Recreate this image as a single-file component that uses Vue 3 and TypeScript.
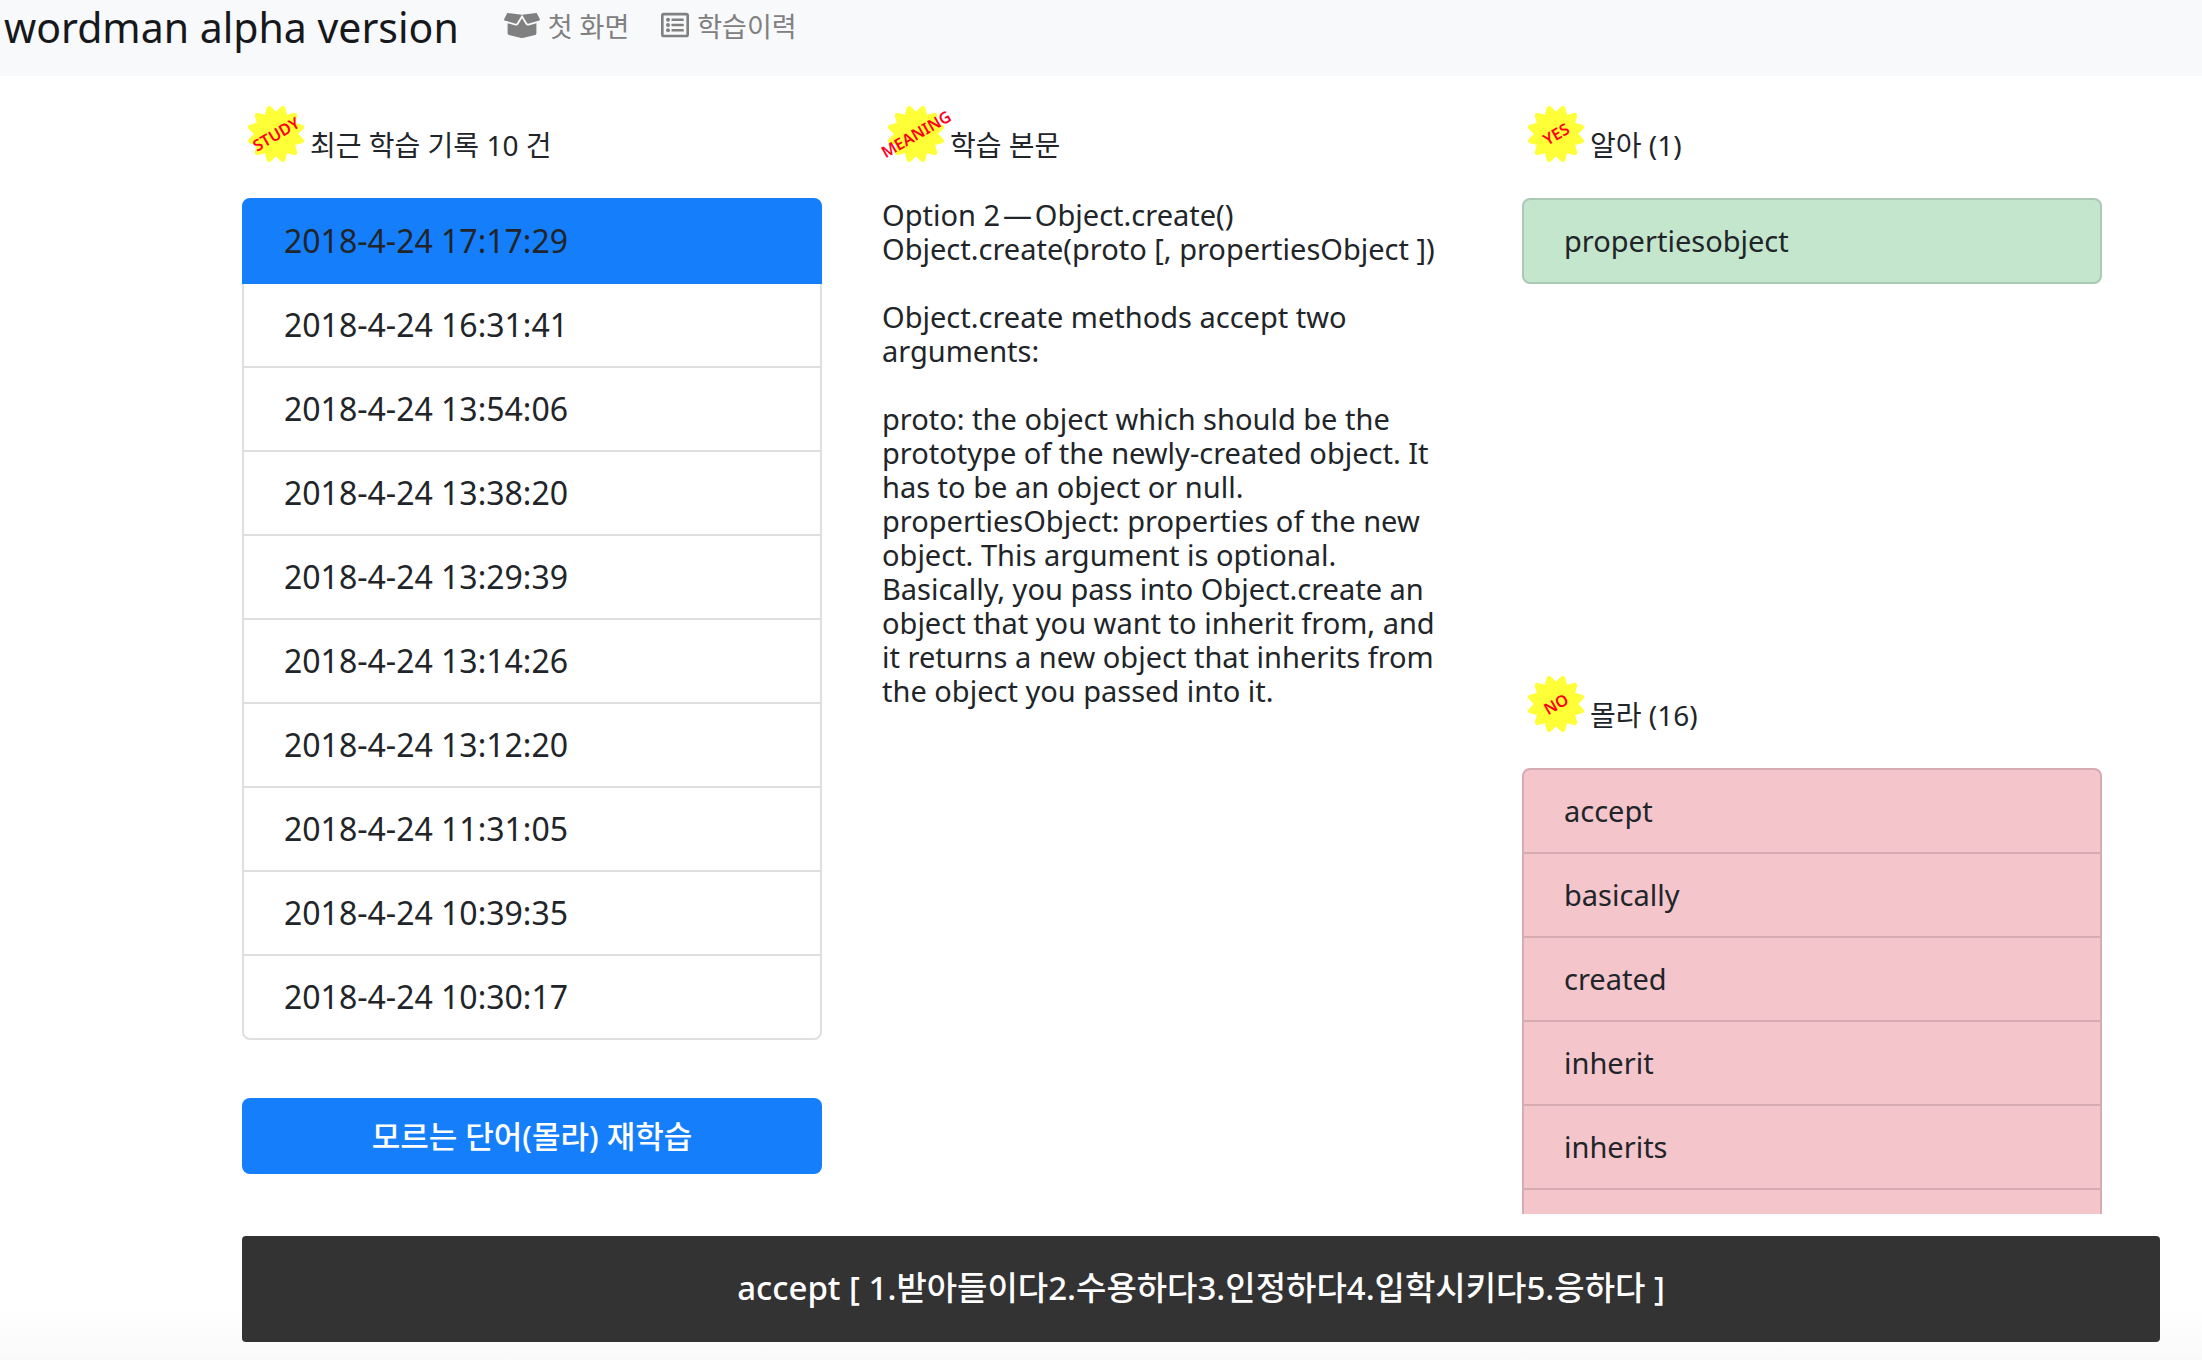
<script setup lang="ts">
import { ref } from 'vue'

const history = [
  '2018-4-24 17:17:29',
  '2018-4-24 16:31:41',
  '2018-4-24 13:54:06',
  '2018-4-24 13:38:20',
  '2018-4-24 13:29:39',
  '2018-4-24 13:14:26',
  '2018-4-24 13:12:20',
  '2018-4-24 11:31:05',
  '2018-4-24 10:39:35',
  '2018-4-24 10:30:17',
]
const selected = ref(0)

const passage = `Option 2\u200a—\u200aObject.create()
Object.create(proto [, propertiesObject ])

Object.create methods accept two
arguments:

proto: the object which should be the
prototype of the newly-created object. It
has to be an object or null.
propertiesObject: properties of the new
object. This argument is optional.
Basically, you pass into Object.create an
object that you want to inherit from, and
it returns a new object that inherits from
the object you passed into it.`

const known = ['propertiesobject']
const unknown = ['accept', 'basically', 'created', 'inherit', 'inherits', '\u00a0']

const burst =
  'M458.622 255.92l45.985-45.005c13.708-12.977 7.316-36.039-10.664-40.339l-62.65-15.99 17.661-62.015c4.991-17.838-11.829-34.663-29.661-29.671l-61.994 17.667-15.984-62.671C337.085.197 313.765-6.276 300.99 7.228L256 53.57 211.011 7.229c-12.63-13.351-36.047-7.234-40.325 10.668l-15.984 62.671-61.995-17.667C74.87 57.907 58.056 74.738 63.046 92.572l17.661 62.015-62.65 15.99C.069 174.878-6.31 197.944 7.392 210.915l45.985 45.005-45.985 45.004c-13.708 12.977-7.316 36.039 10.664 40.339l62.65 15.99-17.661 62.015c-4.991 17.838 11.829 34.663 29.661 29.671l61.994-17.667 15.984 62.671c4.439 18.575 27.696 24.018 40.325 10.668L256 458.61l44.989 46.001c12.5 13.488 35.987 7.486 40.325-10.668l15.984-62.671 61.994 17.667c17.836 4.994 34.651-11.837 29.661-29.671l-17.661-62.015 62.65-15.99c17.987-4.302 24.366-27.367 10.664-40.339z'
</script>

<template>
  <div class="page">
    <header class="navbar">
      <a class="brand" href="#">wordman alpha version</a>
      <nav class="links">
        <a href="#">
          <svg width="36" height="29" viewBox="0 0 640 512" aria-hidden="true">
            <path
              fill="currentColor"
              d="M425.7 256c-16.9 0-32.8-9-41.4-23.4L320 126l-64.2 106.6c-8.7 14.5-24.6 23.5-41.5 23.5-4.5 0-9-.6-13.3-1.9L64 215v178c0 14.7 10 27.5 24.2 31l216.2 54.1c10.2 2.5 20.9 2.5 31 0L551.8 424c14.2-3.6 24.2-16.4 24.2-31V215l-137 39.1c-4.3 1.3-8.8 1.9-13.3 1.9zm212.6-112.2L586.8 41c-3.1-6.2-9.8-9.8-16.7-8.9L320 64l91.7 152.1c3.8 6.3 11.4 9.3 18.5 7.3l197.9-56.5c9.9-2.9 14.7-13.9 10.2-23.1zM53.2 41L1.7 143.8c-4.6 9.2.3 20.2 10.1 23l197.9 56.5c7.1 2 14.7-1 18.5-7.3L320 64 69.8 32.1c-6.9-.8-13.5 2.7-16.6 8.9z"
            />
          </svg>
          <span>첫 화면</span>
        </a>
        <a href="#">
          <svg width="28" height="28" viewBox="0 0 512 512" aria-hidden="true">
            <rect x="24" y="56" width="464" height="400" rx="28" fill="none" stroke="currentColor" stroke-width="48" />
            <g fill="currentColor">
              <rect x="192" y="136" width="224" height="48" rx="12" />
              <rect x="192" y="232" width="224" height="48" rx="12" />
              <rect x="192" y="328" width="224" height="48" rx="12" />
              <circle cx="128" cy="160" r="36" />
              <circle cx="128" cy="256" r="36" />
              <circle cx="128" cy="352" r="36" />
            </g>
          </svg>
          <span>학습이력</span>
        </a>
      </nav>
    </header>

    <main class="columns">
      <section class="column">
        <h2 class="heading">
          <span class="badge">
            <svg viewBox="0 0 512 512" aria-hidden="true"><path :d="burst" /></svg>
            <span class="tag">STUDY</span>
          </span>
          최근 학습 기록 10 건
        </h2>
        <ul class="list dates">
          <li v-for="(time, i) in history" :key="time" :class="{ active: i === selected }">
            <button type="button" class="entry" @click="selected = i">{{ time }}</button>
          </li>
        </ul>
        <button type="button" class="restudy">모르는 단어(몰라) 재학습</button>
      </section>

      <section class="column">
        <h2 class="heading">
          <span class="badge">
            <svg viewBox="0 0 512 512" aria-hidden="true"><path :d="burst" /></svg>
            <span class="tag">MEANING</span>
          </span>
          학습 본문
        </h2>
        <p class="passage">{{ passage }}</p>
      </section>

      <section class="column">
        <div class="known">
          <h2 class="heading">
            <span class="badge">
              <svg viewBox="0 0 512 512" aria-hidden="true"><path :d="burst" /></svg>
              <span class="tag">YES</span>
            </span>
            알아 (1)
          </h2>
          <ul class="list green">
            <li v-for="word in known" :key="word" class="word">{{ word }}</li>
          </ul>
        </div>
        <div class="unknown">
          <h2 class="heading">
            <span class="badge">
              <svg viewBox="0 0 512 512" aria-hidden="true"><path :d="burst" /></svg>
              <span class="tag">NO</span>
            </span>
            몰라 (16)
          </h2>
          <ul class="list red">
            <li v-for="word in unknown" :key="word" class="word">{{ word }}</li>
          </ul>
        </div>
      </section>
    </main>

    <footer class="meaning">accept [ 1.받아들이다2.수용하다3.인정하다4.입학시키다5.응하다 ]</footer>
  </div>
</template>

<style>
body {
  margin: 0;
  background: #fff;
}
</style>

<style scoped>
.page {
  box-sizing: border-box;
  min-height: 100vh;
  padding-bottom: 18px;
  font-family: 'Noto Sans', 'Noto Sans CJK KR', sans-serif;
  color: #212529;
  background: linear-gradient(to top, #f9f9f9, #fff 50px);
}
.page * {
  box-sizing: border-box;
}
.navbar {
  display: flex;
  align-items: flex-start;
  height: 76px;
  padding-left: 4px;
  background: #f8f9fb;
}
.brand {
  font-size: 41px;
  line-height: 54px;
  color: #16181b;
  text-decoration: none;
  white-space: nowrap;
}
.links {
  display: flex;
  gap: 32px;
  margin-left: 45px;
}
.links a {
  display: flex;
  align-items: center;
  gap: 8px;
  height: 50px;
  font-size: 27px;
  color: #808080;
  text-decoration: none;
  white-space: nowrap;
}
.columns {
  display: grid;
  grid-template-columns: repeat(3, minmax(0, 1fr));
  gap: 60px;
  padding: 0 100px 0 242px;
}
.column {
  min-width: 0;
}
.heading {
  display: flex;
  align-items: flex-end;
  height: 122px;
  margin: 0;
  padding-bottom: 32px;
  font-size: 28px;
  font-weight: 400;
  line-height: 42px;
  white-space: nowrap;
}
.badge {
  position: relative;
  display: flex;
  justify-content: center;
  width: 68px;
  height: 60px;
}
.badge svg {
  width: 56px;
  height: 56px;
  fill: #ffff38;
}
.tag {
  position: absolute;
  top: 28px;
  left: 50%;
  font-size: 16px;
  font-weight: 600;
  line-height: 20px;
  color: #ff0019;
  transform: translate(-50%, -50%) rotate(-30deg);
}
.list {
  margin: 0;
  padding: 0;
  list-style: none;
  font-size: 29px;
  line-height: 42px;
}
.list li {
  border: 2px solid #dfdfdf;
}
.list li + li {
  margin-top: -2px;
}
.list li:first-child {
  border-top-left-radius: 8px;
  border-top-right-radius: 8px;
}
.list li:last-child {
  border-bottom-left-radius: 8px;
  border-bottom-right-radius: 8px;
}
.list li.active {
  position: relative;
  border-color: #157efb;
  background: #157efb;
}
.dates {
  font-size: 32px;
}
.entry {
  display: block;
  width: 100%;
  height: 82px;
  padding: 0 40px;
  border: 0;
  background: none;
  font: inherit;
  color: inherit;
  text-align: left;
}
.word {
  padding: 20px 40px;
}
.list.green li {
  border-color: #abc9b4;
  background: #c3e6cc;
}
.list.red li {
  border-color: #d6abb1;
  background: #f4c6cc;
}
.restudy {
  display: block;
  width: 100%;
  height: 76px;
  margin-top: 58px;
  padding: 0 0 4px;
  border: 0;
  border-radius: 8px;
  background: #157efb;
  font-family: inherit;
  font-size: 31px;
  font-weight: 500;
  color: #fff;
}
.passage {
  margin: 0;
  font-size: 29px;
  line-height: 34px;
  white-space: pre-line;
}
.known {
  height: 570px;
  overflow: hidden;
}
.unknown {
  height: 568px;
  overflow: hidden;
}
.meaning {
  margin: 22px 42px 0 242px;
  padding: 27px 40px 29px;
  border-radius: 4px;
  background: #333;
  font-size: 33px;
  font-weight: 500;
  line-height: 50px;
  color: #fff;
  text-align: center;
}
</style>
